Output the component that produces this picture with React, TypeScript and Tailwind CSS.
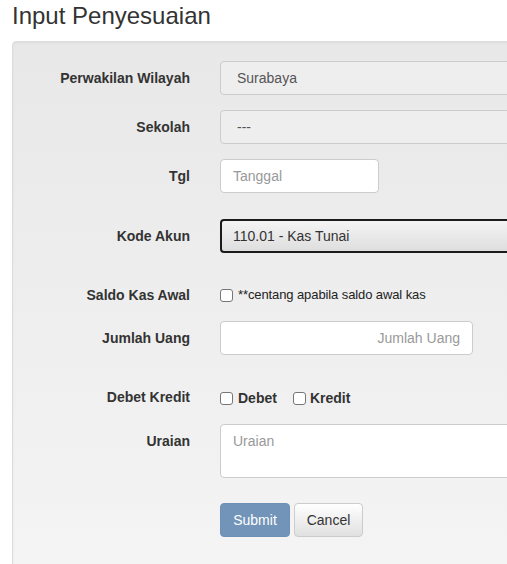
import React from "react"

const font = { fontFamily: '"Liberation Sans", Arial, sans-serif' }

function Label({ children, pt = true }: { children: React.ReactNode; pt?: boolean }) {
  return (
    <div className={`w-[177px] shrink-0 text-right text-[14px] font-bold leading-5 text-[#333] ${pt ? "pt-[7px]" : ""}`}>
      {children}
    </div>
  )
}

function Box() {
  return <span className="inline-block h-[13px] w-[13px] shrink-0 rounded-[3px] border border-[#767676] bg-white" />
}

export default function App() {
  return (
    <div className="h-[564px] w-[507px] overflow-hidden bg-white text-[#333]" style={font}>
      <h3 className="ml-[12px] mt-[3px] text-[24px] font-normal leading-[26px] text-[#333]">Input Penyesuaian</h3>

      <div className="ml-[12px] mt-[12px] h-[560px] w-[540px] rounded-[4px] border border-[#dcdcdc] bg-gradient-to-b from-[#e8e8e8] to-[#f5f5f5] pt-[19px] shadow-[inset_0_1px_3px_rgba(0,0,0,0.05)]">
        <div className="flex flex-col">
          {/* Perwakilan Wilayah */}
          <div className="flex gap-[30px]">
            <Label>Perwakilan Wilayah</Label>
            <div className="flex h-[34px] w-[320px] items-center rounded-[4px] border border-[#ccc] bg-[#eee] pl-4 text-[14px] text-[#555]">
              Surabaya
            </div>
          </div>

          {/* Sekolah */}
          <div className="mt-[15px] flex gap-[30px]">
            <Label>Sekolah</Label>
            <div className="flex h-[34px] w-[320px] items-center rounded-[4px] border border-[#ccc] bg-[#eee] pl-4 text-[14px] text-[#555]">
              ---
            </div>
          </div>

          {/* Tgl */}
          <div className="mt-[15px] flex gap-[30px]">
            <Label>Tgl</Label>
            <div className="flex h-[34px] w-[159px] items-center rounded-[4px] border border-[#ccc] bg-white pl-[12px] text-[14px] text-[#999]">
              Tanggal
            </div>
          </div>

          {/* Kode Akun */}
          <div className="mt-[26px] flex gap-[30px]">
            <Label>Kode Akun</Label>
            <div className="flex h-[34px] w-[320px] items-center rounded-[4px] border-2 border-[#1b1b1b] bg-gradient-to-b from-[#f4f4f4] to-[#dedede] pl-[11px] text-[14px] text-[#333]">
              110.01 - Kas Tunai
            </div>
          </div>

          {/* Saldo Kas Awal */}
          <div className="mt-[32px] flex gap-[30px]">
            <Label pt={false}>Saldo Kas Awal</Label>
            <div className="flex h-5 items-center gap-[5px]">
              <Box />
              <span className="text-[13px] tracking-[-0.1px] text-[#222]">**centang apabila saldo awal kas</span>
            </div>
          </div>

          {/* Jumlah Uang */}
          <div className="mt-[16px] flex gap-[30px]">
            <Label>Jumlah Uang</Label>
            <div className="flex h-[34px] w-[253px] items-center justify-end rounded-[4px] border border-[#ccc] bg-white pr-[12px] text-[14px] text-[#999]">
              Jumlah Uang
            </div>
          </div>

          {/* Debet Kredit */}
          <div className="mt-[32px] flex gap-[30px]">
            <Label pt={false}>Debet Kredit</Label>
            <div className="flex h-5 items-center pt-[3px] text-[14px] font-bold text-[#333]">
              <Box />
              <span className="ml-[5px]">Debet</span>
              <span className="ml-[16px] flex">
                <Box />
              </span>
              <span className="ml-[4px]">Kredit</span>
            </div>
          </div>

          {/* Uraian */}
          <div className="mt-[17px] flex gap-[30px]">
            <Label>Uraian</Label>
            <div className="h-[54px] w-[320px] rounded-[4px] border border-[#ccc] bg-white pl-[12px] pt-[6px] text-[14px] leading-5 text-[#999]">
              Uraian
            </div>
          </div>

          {/* Buttons */}
          <div className="mt-[25px] flex gap-[30px]">
            <div className="w-[177px] shrink-0" />
            <div className="flex gap-[4px]">
              <button className="h-[34px] w-[70px] rounded-[4px] border border-[#6d91b4] bg-[#7194b8] text-[14px] text-white">
                Submit
              </button>
              <button className="h-[34px] w-[69px] rounded-[4px] border border-[#ccc] bg-gradient-to-b from-white to-[#e0e0e0] text-[14px] text-[#333]">
                Cancel
              </button>
            </div>
          </div>
        </div>
      </div>
    </div>
  )
}
